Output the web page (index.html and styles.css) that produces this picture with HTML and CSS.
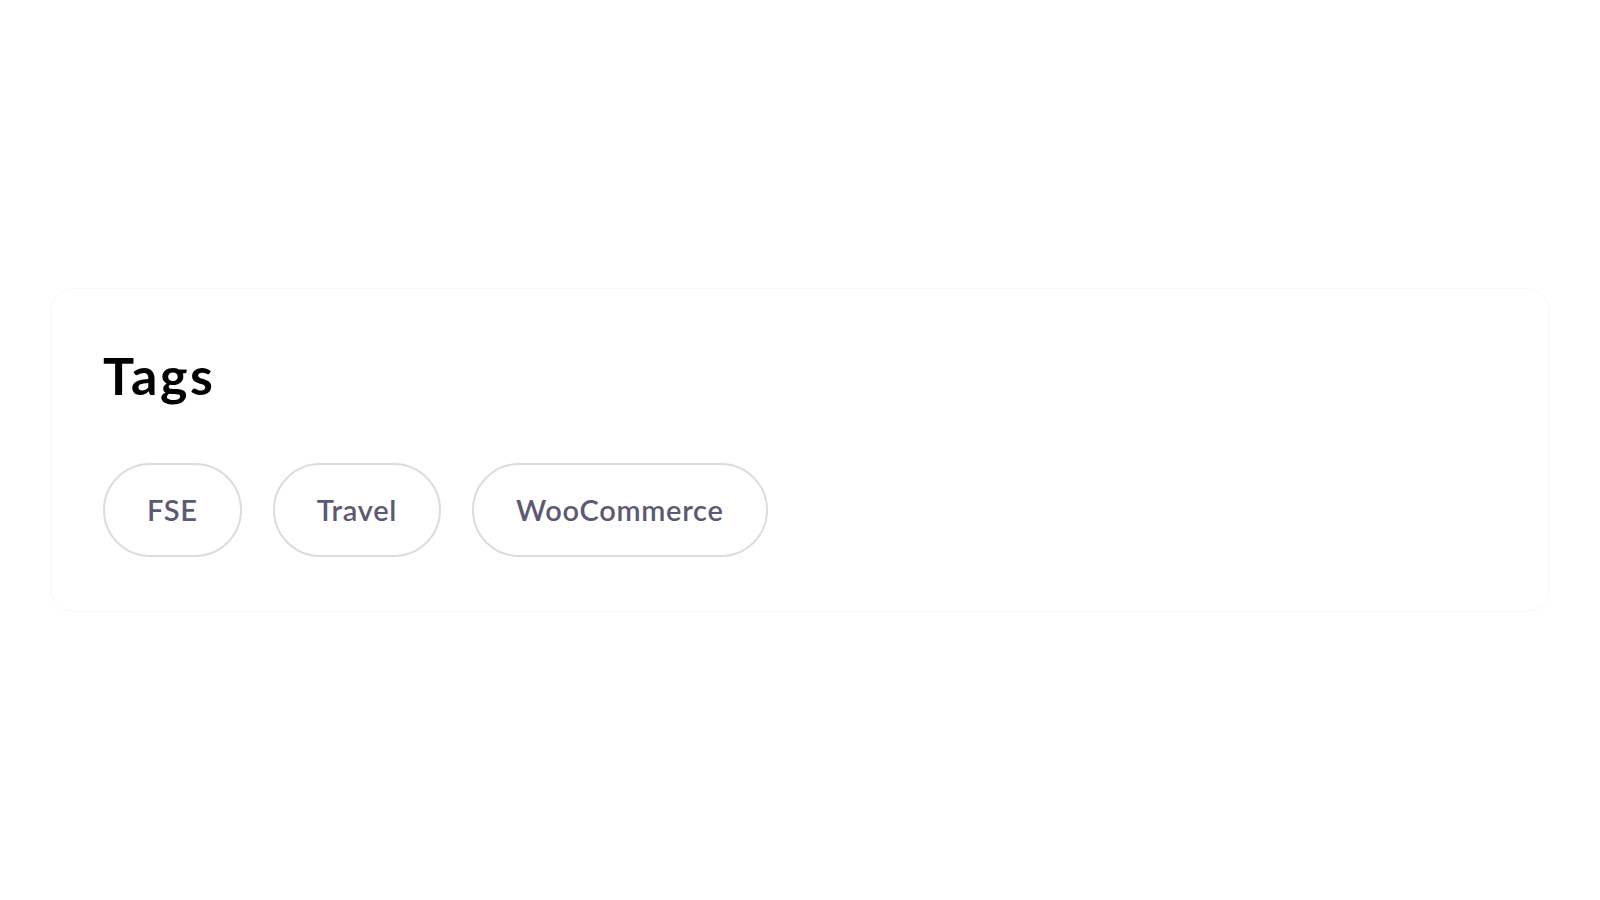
FILE: index.html
```html
<!DOCTYPE html>
<html lang="en">
<head>
    <meta charset="UTF-8">
    <meta name="viewport" content="width=device-width, initial-scale=1.0">
    <title>Tags</title>
    <link rel="stylesheet" href="styles.css">
</head>
<body>
    <div class="page">
        <!-- Tags widget -->
        <section class="tags-card">
            <h2 class="tags-title">Tags</h2>
            <div class="tag-list">
                <a class="tag" href="#">FSE</a>
                <a class="tag" href="#">Travel</a>
                <a class="tag" href="#">WooCommerce</a>
            </div>
        </section>
    </div>
</body>
</html>
```
FILE: styles.css
```css
/* Global styles */
body {
    font-family: Lato, "Open Sans", sans-serif;
    color: #000;
    margin: 0;
    padding: 0;
    background-color: #fff;
}

/* Layout */
.page {
    display: flex;
    align-items: center;
    min-height: 900px;
    padding: 0 50px;
    box-sizing: border-box;
}

/* Card */
.tags-card {
    flex: 1;
    background-color: #fff;
    border: 1px solid #f8f8f9;
    border-radius: 24px;
    padding: 55px 52px 54px;
}

.tags-title {
    font-size: 52px;
    font-weight: 700;
    line-height: 1.2;
    margin: 0 0 56px;
    letter-spacing: 2.6px;
}

/* Tag pills */
.tag-list {
    display: flex;
    flex-wrap: wrap;
    gap: 31px;
}
.tag {
    display: inline-flex;
    align-items: center;
    height: 94px;
    box-sizing: border-box;
    padding: 0 42px;
    border: 2px solid #dcdce0;
    border-radius: 47px;
    color: #5b5a72;
    font-size: 29px;
    font-weight: 600;
    letter-spacing: 0.7px;
    text-decoration: none;
}
```
